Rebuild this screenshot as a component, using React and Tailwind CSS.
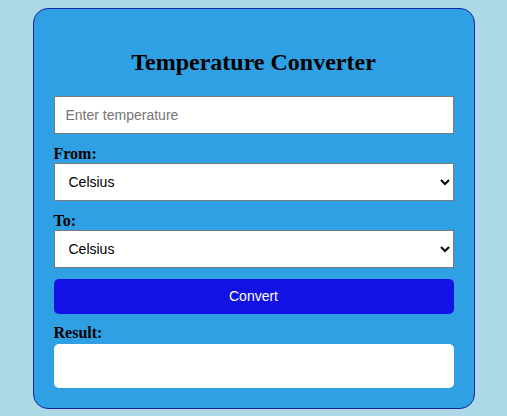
import React, { useState } from 'react';

const units = ['Celsius', 'Fahrenheit', 'Kelvin'];

export default function App() {
  const [value, setValue] = useState('');
  const [from, setFrom] = useState('Celsius');
  const [to, setTo] = useState('Celsius');
  const [result, setResult] = useState('');

  const convert = () => {
    const v = parseFloat(value);
    if (isNaN(v)) return setResult('');
    let c = from === 'Celsius' ? v : from === 'Fahrenheit' ? ((v - 32) * 5) / 9 : v - 273.15;
    let out = to === 'Celsius' ? c : to === 'Fahrenheit' ? (c * 9) / 5 + 32 : c + 273.15;
    setResult(out.toFixed(2) + ' ' + to);
  };

  return (
    <div className="min-h-screen bg-[#add8e6] flex justify-center pt-[8px] font-['Liberation_Serif',serif]">
      <div className="w-[442px] h-[401px] bg-[#2ea0e3] border border-[#1a22a8] rounded-[15px] px-[20px] pt-[20px] pb-[20px] flex flex-col">
        <h2 className="mt-[19px] mb-[20px] text-[24px] leading-[28px] font-bold text-center text-black">
          Temperature Converter
        </h2>

        <input
          type="text"
          value={value}
          onChange={(e) => setValue(e.target.value)}
          placeholder="Enter temperature"
          className="h-[38px] w-full bg-white border border-[#7a7a7a] px-[11px] text-[14px] font-['Liberation_Sans',Arial,sans-serif] text-black placeholder:text-[#757575] outline-none"
        />

        <label className="block mt-[11px] text-[16px] leading-[18px] font-bold text-black">From:</label>
        <select
          value={from}
          onChange={(e) => setFrom(e.target.value)}
          className="h-[38px] w-full bg-white border border-[#7a7a7a] pl-[10px] pr-[6px] text-[14px] font-['Liberation_Sans',Arial,sans-serif] text-black outline-none"
        >
          {units.map((u) => (
            <option key={u}>{u}</option>
          ))}
        </select>

        <label className="block mt-[11px] text-[16px] leading-[18px] font-bold text-black">To:</label>
        <select
          value={to}
          onChange={(e) => setTo(e.target.value)}
          className="h-[38px] w-full bg-white border border-[#7a7a7a] pl-[10px] pr-[6px] text-[14px] font-['Liberation_Sans',Arial,sans-serif] text-black outline-none"
        >
          {units.map((u) => (
            <option key={u}>{u}</option>
          ))}
        </select>

        <button
          onClick={convert}
          className="mt-[11px] h-[35px] w-full rounded-[5px] bg-[#1212e4] text-white text-[14px] font-['Liberation_Sans',Arial,sans-serif]"
        >
          Convert
        </button>

        <label className="block mt-[10px] text-[16px] leading-[18px] font-bold text-black">Result:</label>
        <div className="mt-[2px] h-[44px] w-full bg-white rounded-[5px] px-[10px] flex items-center text-[16px] text-black">
          {result}
        </div>
      </div>
    </div>
  );
}
